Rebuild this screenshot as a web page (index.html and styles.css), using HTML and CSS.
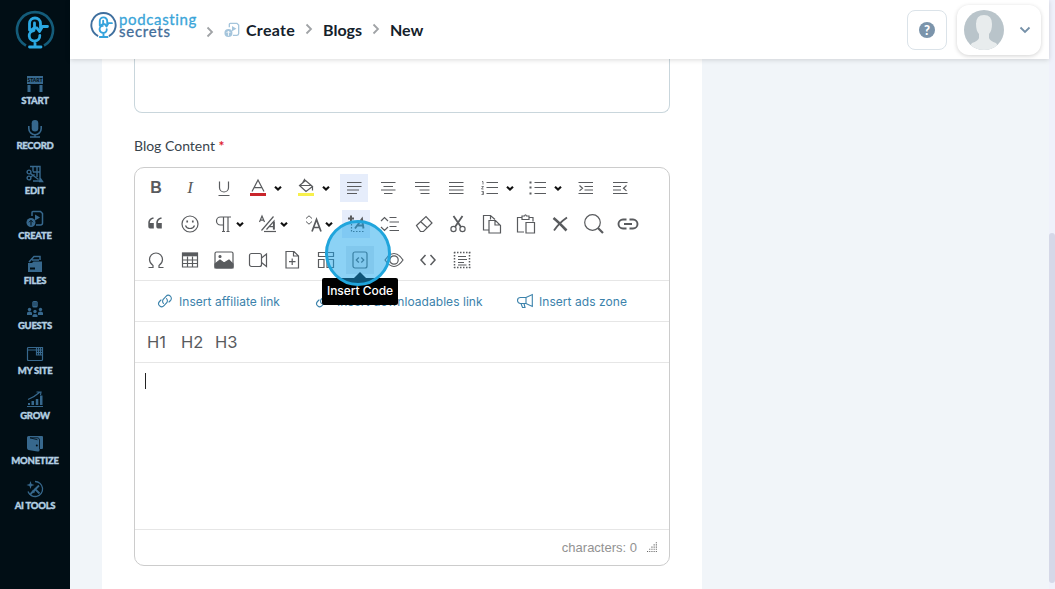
FILE: index.html
```
<!DOCTYPE html>
<html lang="en">
  <head>
    <meta charset="UTF-8" />
    <title>Podcasting Secrets - New Blog</title>
    <link rel="stylesheet" href="styles.css">
  </head>
  <body>
    <!-- shared icons -->
    <svg class="sprite">
      <symbol id="mic-logo" viewBox="0 0 40 40">
        <path d="M14.500 20V13.500a5.500 5.500 0 0 1 11 0V18M19.500 13v4.500l-4 3M19.500 18h2.500l2.500 3.500 3-5h5M19 20.500a5.300 5.300 0 1 0 5.800 5M20 31v5.500M14.500 37h11.500" fill="none" stroke-linejoin="round" stroke-linecap="round" />
      </symbol>
      <symbol id="caret" viewBox="0 0 10 28">
        <path d="M2 12.700l3 2.900 3-2.900" fill="none" stroke="#111" stroke-width="2.100" />
      </symbol>
      <symbol id="chevron" viewBox="0 0 8 12">
        <path d="M1.500 1.500L6 6l-4.500 4.500" fill="none" stroke="#a0a3a6" stroke-width="1.800" />
      </symbol>
      <symbol id="create" viewBox="0 0 18 18">
        <path d="M6 6V2.500Q6 1.500 7 1.500h7.500l2 2V13q0 2-2 2H10" fill="none" stroke="currentColor" stroke-width="1.500" />
        <circle cx="5" cy="12.500" r="4.500" fill="currentColor" />
        <path d="M5 15.500v-5M3 12.300l2-2 2 2" fill="none" stroke="var(--cut)" />
        <path d="M9 4.500l5 3-5 3z" fill="currentColor" />
      </symbol>
      <symbol id="link" viewBox="0 0 16 16">
        <path d="M6.500 10.300a3 3 0 0 1 0-4.300L9 3.300a3 3 0 0 1 4.500 4.200L12 9M9.500 5.700a3 3 0 0 1 0 4.300L7 12.700a3 3 0 0 1-4.500-4.200L4 7" fill="none" stroke="currentColor" stroke-width="1.100" stroke-linecap="round" />
      </symbol>
    </svg>

    <nav class="sidebar">
      <svg class="sidebar-logo" viewBox="0 0 40 40">
        <path d="M11 35.700A18 18 0 1 1 29 35.700" fill="none" stroke="#145c7a" stroke-width="2.600" />
        <use href="#mic-logo" stroke="#2ba8e2" stroke-width="2.800" />
      </svg>
      <a class="nav-item">
        <svg viewBox="0 0 18 18" fill="currentColor"><path d="M1 1h16v8H1zM1.500 10h3v7h-3zM13.500 10h3v7h-3z" /><text x="9" y="6.900" class="start-sign">START</text></svg>
        <span>START</span>
      </a>
      <a class="nav-item">
        <svg viewBox="0 0 18 18" fill="none" stroke="currentColor" stroke-width="1.600"><rect x="5.700" y="0" width="6.600" height="11.500" rx="3.300" fill="currentColor" stroke="none" /><path d="M2.800 6v2.500a6.200 6.200 0 0 0 12.400 0V6M9 14v3M4 17h10" /></svg>
        <span>RECORD</span>
      </a>
      <a class="nav-item">
        <svg viewBox="0 0 18 18" fill="none" stroke="currentColor" stroke-width="1.400"><path d="M4 1.500h10v14.500H7M7 2v4.500M11 2v10M7 7h7M14 13l2.500 3.500H13" /><circle cx="3" cy="7" r="1.900" /><circle cx="3" cy="13" r="1.900" /><path d="M4.500 8.500l8 6M4.500 12l4-2.500" /></svg>
        <span>EDIT</span>
      </a>
      <a class="nav-item">
        <svg><use href="#create" /></svg>
        <span>CREATE</span>
      </a>
      <a class="nav-item">
        <svg viewBox="0 0 18 18" fill="currentColor"><path d="M2 8h4l1.500-1.500H16V17H2z" /><path d="M3 7l5-5.500h6V5M6 5h7" fill="none" stroke="currentColor" stroke-width="1.500" /><path class="cut" d="M4 13.500h5" stroke-width="2" /></svg>
        <span>FILES</span>
      </a>
      <a class="nav-item">
        <svg viewBox="0 0 18 18" fill="currentColor"><rect x="6.300" y="1" width="5.400" height="6.500" rx="1.500" /><circle cx="3.500" cy="9.500" r="1.700" /><circle cx="14.500" cy="9.500" r="1.700" /><circle cx="9" cy="11.500" r="1.700" /><path d="M1 15v-2q0-1.500 2.500-1.500T6 13v2zM12 15v-2q0-1.500 2.500-1.500T17 13v2zM6.500 17v-1.500Q6.500 14 9 14t2.500 1.500V17z" /><path class="cut" d="M7 3h4M7 5h4" stroke-width=".5" /></svg>
        <span>GUESTS</span>
      </a>
      <a class="nav-item">
        <svg viewBox="0 0 18 18" fill="none" stroke="currentColor" stroke-width="1.200"><path d="M16.500 10v4.500q0 1-1 1h-13q-1 0-1-1v-11q0-1 1-1h14v7.500h-6V2.500M1.500 5H10M10.500 5h6M10.500 7.500h6M12.500 2.500V10M14.500 2.500V10" /></svg>
        <span>MY SITE</span>
      </a>
      <a class="nav-item">
        <svg viewBox="0 0 18 18" fill="currentColor"><path d="M2 13h2v2H2zM5.500 11H8v4H5.500zM9.800 9h2.500v6H9.800zM14 5.500h2.500V15H14z" /><path d="M1 16.500h16M2 9.500q7-3 12-7.500M10.500 2H15l-.5 3" fill="none" stroke="currentColor" stroke-width="1.200" /></svg>
        <span>GROW</span>
      </a>
      <a class="nav-item">
        <svg viewBox="0 0 18 18" fill="currentColor"><path d="M1 2.500Q1 1 2.500 1H16q1 0 1 1V13q0 1-1 1h-2.500v1q0 2-2 1.500L2.500 15Q1 14.500 1 13z" /><path class="cut" d="M4 2.800h8q1.500.5 1.500 2.200V14M4 2.800l7.500 2" fill="none" stroke-width=".8" /><circle class="hole" cx="10.800" cy="10.500" r="1" /></svg>
        <span>MONETIZE</span>
      </a>
      <a class="nav-item">
        <svg viewBox="0 0 18 18" fill="none" stroke="currentColor" stroke-width="1.300"><path d="M9 1.500a7.500 7.500 0 1 1-7 10" /><path d="M4.500 1l1 3 3 1-3 1-1 3-1-3-3-1 3-1z" fill="currentColor" stroke="none" /><path d="M5 13.500l8-8M8.500 8.500l5 5M4 15l3-4 1.500 1.500" stroke-width="1.800" /></svg>
        <span>AI TOOLS</span>
      </a>
    </nav>

    <div class="page">
      <header class="topbar">
        <a class="brand">
          <svg viewBox="0 0 40 40">
            <path d="M12 35.700A18 18 0 1 1 28 35.700" fill="none" stroke="#3f6f9e" stroke-width="2.800" />
            <use href="#mic-logo" stroke="#35a3dc" stroke-width="2.800" />
          </svg>
          <span class="brand-name"><span class="brand-top">podcasting</span><span class="brand-bottom">secrets</span></span>
        </a>
        <div class="breadcrumbs">
          <svg class="sep sep-first"><use href="#chevron" /></svg>
          <svg class="crumb-icon"><use href="#create" /></svg>
          <a class="crumb crumb-create">Create</a>
          <svg class="sep"><use href="#chevron" /></svg>
          <a class="crumb crumb-blogs">Blogs</a>
          <svg class="sep"><use href="#chevron" /></svg>
          <a class="crumb crumb-new">New</a>
        </div>
        <button class="help"><span>?</span></button>
        <div class="profile">
          <svg class="avatar" viewBox="0 0 40 40">
            <defs><clipPath id="round"><circle cx="20" cy="20" r="20" /></clipPath></defs>
            <g clip-path="url(#round)">
              <path d="M0 0h40v40H0z" fill="#b9c4ca" />
              <path d="M12 14q0-9 8-9t8 9q0 7-3 10v4q1 3 7 5l5 7H3l5-7q6-2 7-5v-4q-3-3-3-10z" fill="#e8eced" />
            </g>
          </svg>
          <svg class="profile-caret" viewBox="0 0 12 8"><path d="M1.500 1.500L6 6l4.500-4.500" fill="none" stroke="#7590a8" stroke-width="1.800" /></svg>
        </div>
      </header>

      <main class="content">
        <div class="card">
          <div class="field"></div>
          <label class="field-label">Blog Content <b>*</b></label>

          <div class="editor">
            <div class="toolbar">
              <div class="tool-row shifted">
                <button class="tool bold">B</button>
                <button class="tool italic">I</button>
                <button class="tool"><svg><path d="M9.500 7.500v6a4.500 4.500 0 0 0 9 0v-6M8.500 21.500h11" /></svg></button>
                <button class="tool"><svg><path d="M8 17.500L14 6l6 11.500M10 13.700h8" /><path d="M6 20.500h16" stroke="#c9252b" stroke-width="3" /></svg></button>
                <button class="drop"><svg><use href="#caret" /></svg></button>
                <button class="tool"><svg><path d="M13.500 6.500l7 6-6.500 5-6.500-6zM10.500 9l2-3.500 1 2M8 11.500h11.500M20.500 12.500v4" /><path d="M6 20.500h16" stroke="#f7f04c" stroke-width="3" /></svg></button>
                <button class="drop"><svg><use href="#caret" /></svg></button>
                <button class="tool active"><svg><path d="M7 8.500h14.500M7 12.500h14.500M7 16h12M7 19.500h10" /></svg></button>
                <button class="tool"><svg><path d="M7 8.500h14.500M9.500 12.500h9.500M7 16h14.500M10 19.500h8.500" /></svg></button>
                <button class="tool"><svg><path d="M7 8.500h14.500M7 12.500h14.500M11.500 16h10M12.500 19.500h9" /></svg></button>
                <button class="tool"><svg><path d="M7 8.500h14.500M7 12.500h14.500M7 16h14.500M7 19.500h14.500" /></svg></button>
                <button class="tool"><svg><path d="M10.500 8.500H22M10.500 13.500H22M10.500 19.500H22" /><path d="M6 7.500h1v3M5.500 12.500h2l-2 2.500h2M5.500 17.500h2v3h-2M6 19h1" stroke-width=".8" /></svg></button>
                <button class="drop"><svg><use href="#caret" /></svg></button>
                <button class="tool"><svg><path d="M10.500 8.500H22M10.500 13.500H22M10.500 19.500H22" /><path d="M5.500 8.500h2M5.500 13.500h2M5.500 19.500h2" stroke-width="2" /></svg></button>
                <button class="drop"><svg><use href="#caret" /></svg></button>
                <button class="tool"><svg><path d="M6.500 8.500H21M12.500 12.500H21M12.500 16H21M6.500 19.500H21M7.500 11.500l3 2.700-3 2.700" /></svg></button>
                <button class="tool"><svg><path d="M7 8.500h14.500M7 12.500h8M7 16h8M7 19.500h14.500M20.500 11.500l-3 2.700 3 2.700" /></svg></button>
              </div>

              <div class="tool-row">
                <button class="tool"><svg><path d="M12.500 8q-4.500 1-4.500 5M20.500 8q-4.500 1-4.500 5" stroke-width="1.600" /><path d="M7.300 13h5.500v5.500H9q-1.700 0-1.700-2zM15.300 13h5.500v5.500H17q-1.700 0-1.700-2z" fill="#595b5e" stroke="none" /></svg></button>
                <button class="tool"><svg><circle cx="15" cy="14" r="8" /><path d="M10.500 15.500q1 3 4.500 3t4.500-3" /><path d="M12.200 10.500v2M17.800 10.500v2" stroke-width="1.700" /></svg></button>
                <button class="tool-menu"><svg><path d="M22 7H11.500a4 4 0 0 0 0 8H14M14.500 7v14M19 7v14M13 21.500h3M17.500 21.500h3" /></svg><svg class="caret"><use href="#caret" /></svg></button>
                <button class="tool-menu"><svg><path d="M6.500 12L9 6l2.500 6M7.500 10.200h3M8.500 20.500L20.500 6.500M13.500 19.500L21 11v8.500M15.500 16.700H21" /><path d="M20.800 12v7.500" stroke-width="1.800" /><path d="M11 21.500h12" /></svg><svg class="caret"><use href="#caret" /></svg></button>
                <button class="tool-menu"><svg><path d="M8 8.500l3-2.700 3 2.700M8 11.500l3 2.700 3-2.700" stroke-width="1" /><path d="M14 21.500l4.500-12 4.500 12M15.500 17.500h6" stroke-width="1.700" /></svg><svg class="caret"><use href="#caret" /></svg></button>
                <button class="tool active"><svg><path d="M6 8.500h6M9 5.500v6" stroke-width="2" /><path d="M13 18.500L20 9l1.500 9.500M15 15.500h6" stroke-width="1.900" /><path d="M9.500 14v7.500H22" stroke-dasharray="1.500 1.500" /></svg></button>
                <button class="tool"><svg><path d="M5 11l3.500-3.500L12 11M5 17l3.500 3.500L12 17M13.500 7.500h7M13.500 12h9.500M13.500 16.500h7M13.500 20.500h9.500" /></svg></button>
                <button class="tool"><svg><path d="M6.500 15.500l9.500-9 6 6.500-8.500 8.500H10.500zM10.500 11.500l7 6.500" /></svg></button>
                <button class="tool"><svg><path d="M9.500 6L17 17M18.500 6L11 17" stroke-width="1.800" /><circle cx="9.500" cy="19" r="2.600" /><circle cx="18.500" cy="19" r="2.600" /></svg></button>
                <button class="tool"><svg><path d="M11 20H5.500V5.500h7L17 9.500M12.500 5.500v4" /><path d="M11 10.500h6.500l5 5V23H11zM17 10.500V15h5.500" /></svg></button>
                <button class="tool"><svg><path d="M12 22H5.500V7.500H10M17 7.500h4v4M10 6h2.500q1-2.500 2 0H17v3.500h-7z" /><path d="M14 12.500h8.500V23H14z" /></svg></button>
                <button class="tool"><svg><path d="M7.500 8q5 4 13 12.500" stroke-width="2.600" /><path d="M21 7.500Q13 13 8 20.500" stroke-width="1.800" /></svg></button>
                <button class="tool"><svg><circle cx="12.500" cy="12.500" r="7.800" /><path d="M18 18l5 5" stroke-width="2.200" /></svg></button>
                <button class="tool"><svg><path d="M12.500 9.500H9a4.500 4.500 0 0 0 0 9h3.500M15.500 9.500H19a4.500 4.500 0 0 1 0 9h-3.500M10 14h8" stroke-width="1.900" /></svg></button>
              </div>

              <div class="tool-row shifted">
                <button class="tool"><svg><path d="M6.500 21.500H11v-2Q7.500 17 7.500 13.500a6.500 6.500 0 0 1 13 0q0 3.500-3.500 6v2h4.500" /></svg></button>
                <button class="tool"><svg><path d="M6.500 7h15v14h-15zM6.500 14h15M6.500 17.500h15M11.500 10.500V21M16.500 10.500V21" /><path d="M6 8.500h16" stroke-width="3.600" /></svg></button>
                <button class="tool"><svg><rect x="5" y="6" width="18" height="16" rx="1.500" /><path d="M5 18l5-4 4 3 5-3 4 4v4H5z" fill="#595b5e" /><circle cx="10" cy="10.500" r="1" fill="#595b5e" /></svg></button>
                <button class="tool"><svg><rect x="5.500" y="7.500" width="12" height="13" rx="2" /><path d="M17.500 12l5-4v12.500l-5-4" /></svg></button>
                <button class="tool"><svg><path d="M8 5.500h8l4.500 4.500V22H8zM15.500 5.500V10h5M14.200 12.500v6.500M11 15.700h6.500" /></svg></button>
                <button class="tool"><svg><path d="M6.500 6.500H21.500v4H6.500zM6.500 13.500H12V21.500H6.500zM15 13.500h6.500V21.500H15z" /></svg></button>
                <button class="tool hover">
                  <svg><rect x="7" y="6" width="14" height="16" rx="2" /><path d="M12.800 11.500L10.300 14l2.500 2.500M15.300 11.500l2.500 2.500-2.500 2.500" /></svg>
                  <span class="tooltip">Insert Code</span>
                  <span class="click-ring"></span>
                </button>
                <button class="tool"><svg><path d="M5 14q9-13 18 0-9 13-18 0z" /><circle cx="14" cy="14" r="4.200" /></svg></button>
                <button class="tool"><svg><path d="M11.500 9L7 14l4.500 5M16.500 9l4.500 5-4.500 5" stroke-width="1.500" /></svg></button>
                <button class="tool"><svg><path d="M6 6.500h16.500M6 21.500h16.500M6.500 6v16M21.500 6v16" stroke-width="1.500" stroke-dasharray="1.500 1.500" /><path d="M10 10.500h8M10 13.500h9M10 16.500h6M10 19h8.500" /></svg></button>
              </div>
            </div>

            <div class="insert-row">
              <a class="insert-link"><svg viewBox="0 0 16 16"><use href="#link" /></svg>Insert affiliate link</a>
              <a class="insert-link wide"><svg viewBox="0 0 16 16"><use href="#link" /></svg>Insert downloadables link</a>
              <a class="insert-link"><svg viewBox="0 0 16 16" fill="none" stroke="currentColor" stroke-width="1.100"><path d="M9 4.500L15.300 1.500v12L9 10.500H3.500a3 3 0 0 1 0-6H9v6M4 10.500l1.500 4H8l-1-4" /></svg>Insert ads zone</a>
            </div>
            <div class="heading-row"><a>H1</a><a>H2</a><a>H3</a></div>
            <div class="writing-area"><span class="cursor"></span></div>
            <div class="status">
              <span>characters: 0</span>
              <svg viewBox="0 0 11 11" fill="none" stroke="#686868" stroke-width="1.100" stroke-dasharray="1.100 1.100"><path d="M0 9.500h11M2.200 7.300H11M4.400 5.100H11M6.600 2.900H11M8.800.7H11" /></svg>
            </div>
          </div>
        </div>
      </main>
    </div>

    <div class="scrollbar"><div class="thumb"></div></div>
  </body>
</html>
```

FILE: styles.css
```
* {
  box-sizing: border-box;
}
body {
  --cut: #010e15;
  margin: 0;
  height: 589px;
  display: flex;
  overflow: hidden;
  font-family: Lato, sans-serif;
  background-color: #f1f5f9;
  color: #14212b;
}
button {
  padding: 0;
  border: none;
  background: none;
}
.sprite {
  position: absolute;
  width: 0;
  height: 0;
}

/* sidebar */
.sidebar {
  width: 70px;
  flex: none;
  background-color: #010e15;
  display: flex;
  flex-direction: column;
  align-items: center;
  color: #37688d;
}
.sidebar-logo {
  width: 40px;
  height: 40px;
  margin: 10px 0 25px;
  flex: none;
}
.nav-item {
  height: 45px;
  flex: none;
  display: flex;
  flex-direction: column;
  align-items: center;
}
.nav-item svg {
  width: 18px;
  height: 18px;
}
.nav-item span {
  margin-top: 1px;
  color: #b3cfe2;
  font-size: 9.5px;
  font-weight: 900;
  line-height: 13px;
  letter-spacing: -0.25px;
  white-space: nowrap;
  -webkit-text-stroke: 0.35px #b3cfe2;
}
.start-sign {
  font-size: 5px;
  font-weight: 900;
  text-anchor: middle;
  fill: #010e15;
}
.cut {
  stroke: var(--cut);
}
.hole {
  fill: var(--cut);
}

/* top bar */
.page {
  width: 979px;
  flex: none;
  display: flex;
  flex-direction: column;
}
.topbar {
  --cut: #fff;
  height: 59px;
  flex: none;
  display: flex;
  background: #fff;
  padding-left: 20px;
  box-shadow: 0 1px 5px rgba(0, 0, 0, 0.15);
  z-index: 1;
}
.brand {
  display: flex;
  width: 116px;
  padding-top: 12px;
}
.brand svg {
  width: 27px;
  height: 27px;
}
.brand-name {
  display: flex;
  flex-direction: column;
  margin-left: 2px;
  padding-top: 1px;
  font-size: 15px;
  line-height: 12px;
}
.brand-top {
  color: #3aa5d9;
  letter-spacing: 0.65px;
  -webkit-text-stroke: 0.3px #3aa5d9;
}
.brand-bottom {
  color: #426d99;
  letter-spacing: 0.75px;
  -webkit-text-stroke: 0.3px #426d99;
}
.breadcrumbs {
  display: flex;
  align-items: center;
  flex: 1;
  height: 60px;
}
.sep {
  width: 8px;
  height: 12px;
  margin-bottom: 2px;
}
.sep-first {
  margin: 4px 10px 0 0;
}
.crumb-icon {
  width: 16px;
  height: 16px;
  margin-right: 6px;
  color: #a5c5dc;
}
.crumb-icon + .crumb {
  margin-left: 0;
}
.crumb {
  font-size: 16px;
  font-weight: bold;
  line-height: 20px;
  margin-left: 10px;
  padding-bottom: 1px;
}
.crumb-create {
  width: 59px;
  letter-spacing: 0.3px;
}
.crumb-blogs {
  width: 49px;
}
.help {
  width: 40px;
  height: 40px;
  margin: 10px 10px 0 0;
  border: 1px solid #dbe3e9;
  border-radius: 8px;
  display: flex;
  align-items: center;
  justify-content: center;
}
.help span {
  width: 16px;
  height: 16px;
  border-radius: 50%;
  background-color: #7b94ab;
  color: #fff;
  font: 900 13px/16px Lato, sans-serif;
}
.profile {
  width: 84px;
  height: 50px;
  margin: 5px 8px 0 0;
  padding: 5px 10px 5px 7px;
  border-radius: 12px;
  background: #fff;
  box-shadow: 0 1px 4px rgba(0, 0, 0, 0.18);
  display: flex;
  align-items: center;
  justify-content: space-between;
}
.avatar {
  width: 40px;
  height: 40px;
}
.profile-caret {
  width: 12px;
  height: 8px;
}

/* form */
.content {
  flex: 1;
  padding-left: 32px;
}
.card {
  width: 600px;
  height: 530px;
  padding: 0 32px;
  background: #fff;
}
.field {
  height: 54px;
  border: 1px solid #c9d6dc;
  border-top: none;
  border-radius: 0 0 8px 8px;
}
.field-label {
  display: block;
  height: 54px;
  padding-top: 23px;
  font-size: 14px;
  line-height: 20px;
  color: #38444c;
}
.field-label b {
  color: #e02030;
}

/* editor */
.editor {
  height: 399px;
  border: 1px solid #ccc;
  border-radius: 10px;
  display: flex;
  flex-direction: column;
  font-family: Inter, sans-serif;
}
.toolbar {
  height: 113px;
  padding: 6px;
  display: flex;
  flex-direction: column;
  gap: 8px;
  border-bottom: 1px solid #e6e6e6;
}
.tool-row {
  display: flex;
}
.shifted {
  padding-left: 1px;
}
.tool,
.tool-menu,
.drop {
  height: 28px;
  color: #595b5e;
}
.tool {
  position: relative;
  width: 28px;
  margin-right: 6px;
}
.tool svg,
.tool-menu svg {
  display: block;
  width: 28px;
  height: 28px;
  fill: none;
  stroke: #595b5e;
  stroke-width: 1.2;
}
.tool-menu {
  display: flex;
  width: 38.33px;
  margin-right: 6px;
}
.tool-menu .caret {
  flex: none;
  width: 10px;
  margin-left: -2px;
}
.drop {
  width: 14px;
  margin-right: 6px;
}
.drop svg {
  display: block;
  width: 10px;
  height: 28px;
  margin-left: 1px;
}
.tool:has(+ .drop) {
  margin-right: 0;
}
.bold {
  font: bold 16px "Liberation Sans", sans-serif;
}
.italic {
  font: italic 17px "Liberation Serif", serif;
}
.active {
  background-color: #e6edfb;
}
.hover {
  background-color: #e8eaee;
}
.tooltip {
  position: absolute;
  left: -24px;
  top: 32px;
  width: 76px;
  height: 27px;
  border-radius: 2px;
  background: #000;
  color: #fff;
  font: 500 12px/26px Inter, sans-serif;
  letter-spacing: -0.05px;
  white-space: nowrap;
  z-index: 2;
}
.tooltip::before {
  content: "";
  position: absolute;
  left: 32px;
  top: -6px;
  border: 6px solid transparent;
  border-top: none;
  border-bottom-color: #000;
}
.click-ring {
  position: absolute;
  left: -21px;
  top: -26px;
  width: 66px;
  height: 66px;
  border: 3px solid #20a5dc;
  border-radius: 50%;
  background: rgba(25, 165, 235, 0.5);
  z-index: 3;
}
.insert-row {
  height: 41px;
  padding-left: 22px;
  display: flex;
  align-items: center;
  border-bottom: 1px solid #e6e6e6;
  color: #3b82ab;
  font-size: 12px;
  letter-spacing: 0.05px;
}
.insert-link {
  display: flex;
  align-items: center;
  width: 158px;
  white-space: nowrap;
  flex: none;
}
.insert-link svg {
  width: 16px;
  height: 16px;
  margin-right: 6px;
}
.insert-link.wide {
  width: 202px;
}
.heading-row {
  height: 41px;
  padding-left: 12px;
  display: flex;
  align-items: center;
  border-bottom: 1px solid #e6e6e6;
  color: #595b5e;
  font-size: 16.5px;
}
.heading-row a {
  width: 34px;
}
.writing-area {
  flex: 1;
  padding: 10px;
}
.cursor {
  display: block;
  width: 1px;
  height: 16px;
  background: #222;
}
.status {
  height: 36px;
  padding-right: 11px;
  border-top: 1px solid #e6e6e6;
  display: flex;
  align-items: center;
  justify-content: flex-end;
  gap: 10px;
  color: #929292;
  font: 13px "Liberation Sans", Arial, sans-serif;
}
.status svg {
  width: 11px;
  height: 11px;
}

/* page scrollbar */
.scrollbar {
  width: 6px;
  padding-top: 233px;
  background: #eff1fb;
}
.thumb {
  height: 350px;
  border-radius: 3px;
  background: #d5d8e8;
}
```
